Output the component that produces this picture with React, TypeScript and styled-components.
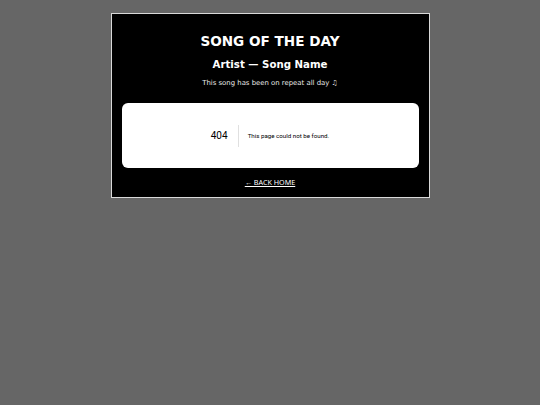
import { createGlobalStyle } from "styled-components";
import styled from "styled-components";

const GlobalStyle = createGlobalStyle`
  html, body {
    margin: 0;
    padding: 0;
    background: #666666;
  }
  body {
    font-family: "DejaVu Sans", sans-serif;
  }
`;

const Page = styled.div`
  display: flex;
  justify-content: center;
  align-items: flex-start;
  padding-top: 13px;
  min-height: 405px;
  box-sizing: border-box;
`;

const Panel = styled.section`
  width: 319px;
  box-sizing: border-box;
  background: #000;
  border: 1px solid #d9d9d9;
  padding: 18px 10px 10px;
  display: flex;
  flex-direction: column;
  align-items: center;
  color: #fff;
`;

const Title = styled.h1`
  margin: 0;
  font-size: 13.6px;
  font-weight: bold;
  line-height: 18px;
`;

const Track = styled.h2`
  margin: 8px 0 0;
  font-size: 10.2px;
  font-weight: bold;
  line-height: 14px;
`;

const Note = styled.p`
  margin: 6px 0 0;
  font-size: 6.9px;
  line-height: 10px;
  color: #e8e8e8;
`;

/* the default "not found" view, sitting in a white card */
const Card = styled.div`
  align-self: stretch;
  margin-top: 15px;
  height: 65px;
  background: #fff;
  border-radius: 6px;
  display: flex;
  align-items: center;
  justify-content: center;
  font-family: Roboto, "Liberation Sans", sans-serif;
  color: #000;
`;

const Code = styled.span`
  font-size: 10px;
  font-weight: 400;
  line-height: 22px;
  padding-right: 10px;
  margin-right: 9px;
  border-right: 1px solid rgba(0, 0, 0, 0.12);
`;

const Message = styled.span`
  font-size: 6.2px;
  line-height: 22px;
`;

const BackLink = styled.a`
  margin-top: 9px;
  font-family: "Noto Sans", "Open Sans", sans-serif;
  font-size: 7.2px;
  line-height: 10px;
  color: #fff;
  text-decoration: underline;
`;

export default function App() {
  return (
    <>
      <GlobalStyle />
      <Page>
        <Panel>
          <Title>SONG OF THE DAY</Title>
          <Track>Artist — Song Name</Track>
          <Note>This song has been on repeat all day ♫</Note>
          <Card>
            <Code>404</Code>
            <Message>This page could not be found.</Message>
          </Card>
          <BackLink href="#">← BACK HOME</BackLink>
        </Panel>
      </Page>
    </>
  );
}
